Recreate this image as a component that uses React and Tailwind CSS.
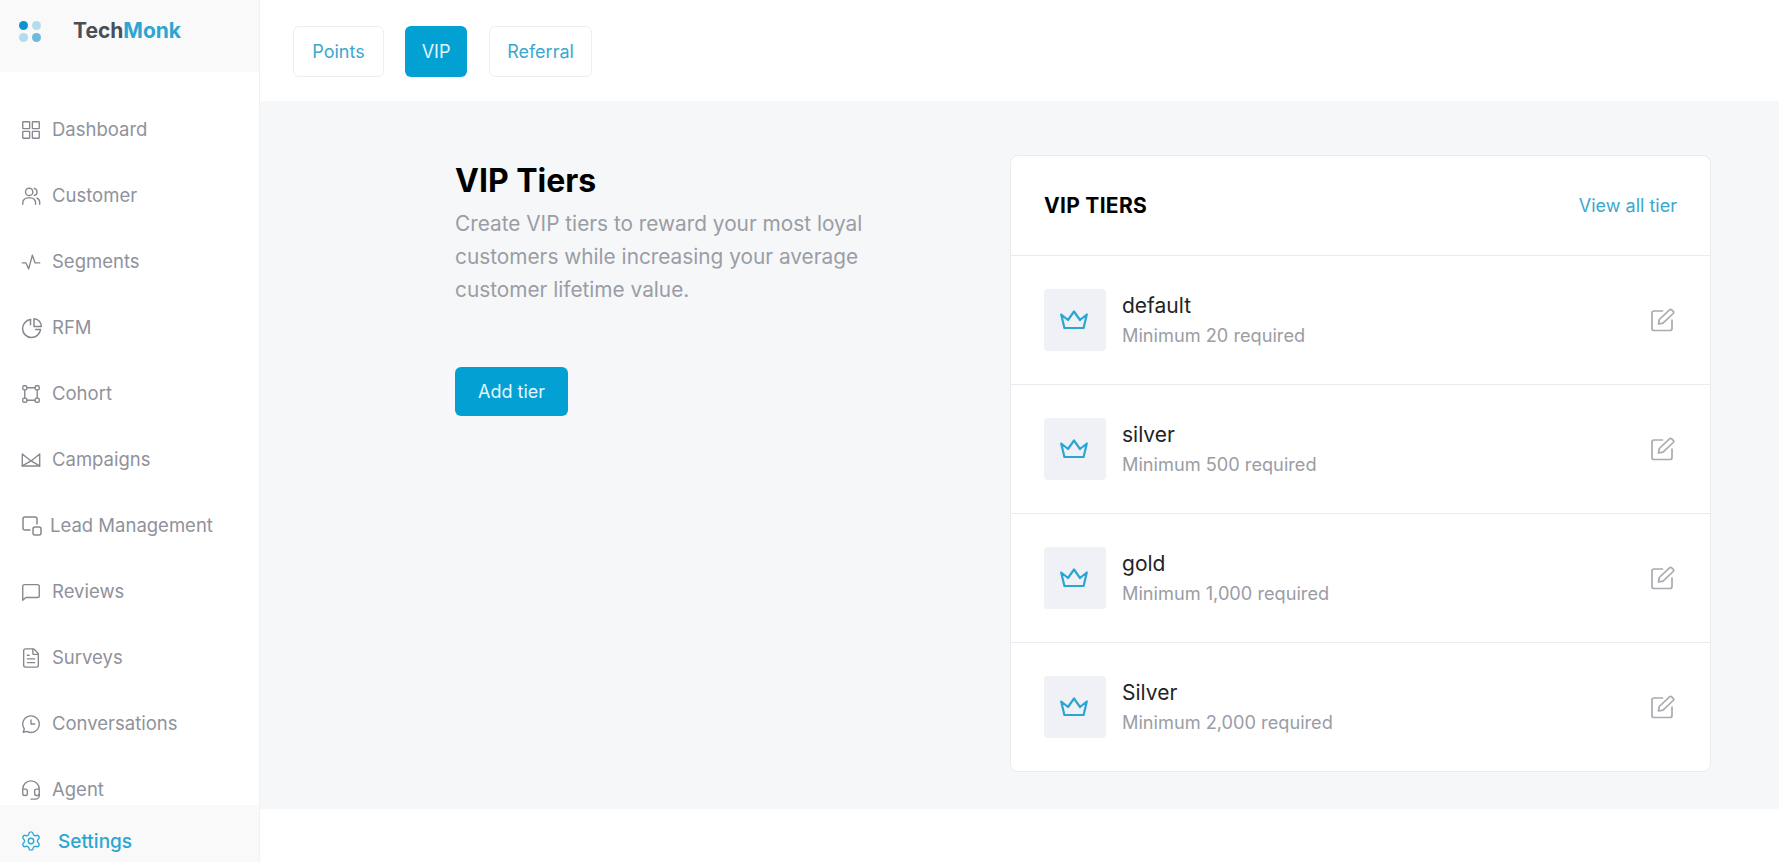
import React from "react";
import { Settings, Headset, FileText } from "lucide-react";

const font = "font-['Inter','Noto_Sans',sans-serif]";

const Ico = ({ children, className = "" }) => (
  <svg viewBox="0 0 24 24" fill="none" stroke="currentColor" strokeWidth="1.5" strokeLinecap="round" strokeLinejoin="round" className={"w-[22px] h-[22px] shrink-0 " + className}>
    {children}
  </svg>
);

const Dash = () => (
  <Ico>
    <rect x="3" y="3" width="7.5" height="7.5" rx="0.5" /><rect x="13.5" y="3" width="7.5" height="7.5" rx="0.5" />
    <rect x="3" y="13.5" width="7.5" height="7.5" rx="0.5" /><rect x="13.5" y="13.5" width="7.5" height="7.5" rx="0.5" />
  </Ico>
);
const Cust = () => (
  <Ico>
    <circle cx="10" cy="7.5" r="4" /><path d="M3 21v-1.5a5.5 5.5 0 0 1 5.5-5.5h3a5.5 5.5 0 0 1 5.5 5.5V21" />
    <path d="M15.5 3.6a4 4 0 0 1 0 7.8" /><path d="M18.5 14.3a5 5 0 0 1 3 4.7V21" />
  </Ico>
);
const Seg = () => (
  <Ico><path d="M2.5 13h4l3 6.5 4-15 3 8.5h5" /></Ico>
);
const Rfm = () => (
  <Ico className="w-[24px] h-[24px]">
    <path d="M10.5 3.6a9 9 0 1 0 10 10h-4.8" /><path d="M10.5 3.6v5.2" />
    <path d="M14 2.8a7.5 7.5 0 0 1 7.3 7.6H14z" />
  </Ico>
);
const Cohort = () => (
  <Ico>
    <rect x="3" y="3" width="4.5" height="4.5" rx="1.5" /><rect x="16.5" y="3" width="4.5" height="4.5" rx="1.5" />
    <rect x="3" y="16.5" width="4.5" height="4.5" rx="1.5" /><rect x="16.5" y="16.5" width="4.5" height="4.5" rx="1.5" />
    <path d="M7.5 5.2h9M7.5 18.8h9M5.2 7.5v9M18.8 7.5v9" />
  </Ico>
);
const Camp = () => (
  <Ico>
    <path d="M2.5 5.5v13h19v-13l-9.5 7.5z" /><path d="M2.5 18.5l9.5-5.5 9.5 5.5" />
  </Ico>
);
const Lead = () => (
  <Ico className="w-[24px] h-[24px]">
    <path d="M10 16H5a2 2 0 0 1-2-2V5a2 2 0 0 1 2-2h10a2 2 0 0 1 2 2v5" />
    <rect x="13" y="13" width="8" height="8" rx="2" />
  </Ico>
);
const Rev = () => (
  <Ico><path d="M3 21V6a2 2 0 0 1 2-2h14a2 2 0 0 1 2 2v10a2 2 0 0 1-2 2H6.5z" /></Ico>
);
const Conv = () => (
  <Ico>
    <path d="M3.5 21l1.2-3.6A9 9 0 1 1 7.6 20z" /><path d="M12 7.5V12h4" />
  </Ico>
);
const Crown = () => (
  <svg viewBox="0 0 28 19" fill="none" stroke="#2ba6d2" strokeWidth="2.2" strokeLinejoin="round" strokeLinecap="round" className="w-[28px] h-[19px] -ml-[2px] -mt-[2px]">
    <path d="M1.2 4.5L8 10l6-8.5L20 10l6.8-5.5L23.6 18H4.4z" />
  </svg>
);
const Edit = () => (
  <svg viewBox="0 0 26 24" fill="none" stroke="#a9abaf" strokeWidth="1.7" strokeLinejoin="round" strokeLinecap="round" className="w-[26px] h-[24px] shrink-0 -mt-[1px]">
    <path d="M12.5 3H4a2 2 0 0 0-2 2v15.5a2 2 0 0 0 2 2h16a2 2 0 0 0 2-2V12" />
    <path d="M8.5 16l.8-4.5L19.5 1.8a1.6 1.6 0 0 1 2.2 0l1.5 1.5a1.6 1.6 0 0 1 0 2.2L13 15.2z" />
  </svg>
);

const navItems = [
  ["Dashboard", <Dash />, "gap-[10px]"],
  ["Customer", <Cust />, "gap-[10px]"],
  ["Segments", <Seg />, "gap-[10px]"],
  ["RFM", <Rfm />, "gap-[8px]"],
  ["Cohort", <Cohort />, "gap-[10px]"],
  ["Campaigns", <Camp />, "gap-[10px]"],
  ["Lead Management", <Lead />, "gap-[6px]"],
  ["Reviews", <Rev />, "gap-[10px]"],
  ["Surveys", <FileText size={22} strokeWidth={1.5} className="shrink-0" />, "gap-[10px]"],
  ["Conversations", <Conv />, "gap-[10px]"],
  ["Agent", <Headset size={22} strokeWidth={1.5} className="shrink-0" />, "gap-[10px]"],
];

const tiers = [
  ["default", "Minimum 20 required"],
  ["silver", "Minimum 500 required"],
  ["gold", "Minimum 1,000 required"],
  ["Silver", "Minimum 2,000 required"],
];

export default function App() {
  return (
    <div className={"flex h-[862px] overflow-hidden bg-white " + font}>
      <aside className="w-[260px] shrink-0 flex flex-col border-r border-[#f0f1f3] bg-white">
        <div className="h-[72px] shrink-0 bg-[#f9f9f9] flex items-start pl-[19px] pt-[21px]">
          <div className="grid grid-cols-2 gap-x-[3px] gap-y-[3px] w-[22px] mr-[32px]">
            <span className="w-[9px] h-[9px] rounded-full bg-[#0d93cf]" />
            <span className="w-[9px] h-[9px] rounded-full bg-[#b3dcee]" />
            <span className="w-[9px] h-[9px] rounded-full bg-[#b3dcee]" />
            <span className="w-[9px] h-[9px] rounded-full bg-[#6cbbdf]" />
          </div>
          <div className="text-[21px] leading-[24px] font-bold text-[#4a4e57] -mt-[2px]">
            Tech<span className="text-[#2ba6d2]">Monk</span>
          </div>
        </div>
        <nav className="flex-1 overflow-hidden pt-[25px] flex flex-col">
          {navItems.map(([label, icon, gap]) => (
            <div key={label} className={"h-[66px] shrink-0 flex items-center pl-[20px] text-[18.5px] text-[#8f929b] " + gap}>
              <span className="text-[#85888f] flex">{icon}</span>
              <span>{label}</span>
            </div>
          ))}
        </nav>
        <div className="h-[57px] shrink-0 bg-[#f9f9f9] flex items-start pt-[25px] pl-[20px] gap-[16px] text-[19px] leading-[24px] font-medium text-[#2ba6d2]">
          <Settings size={22} strokeWidth={1.5} />
          <span>Settings</span>
        </div>
      </aside>

      <main className="flex-1 min-w-0 flex flex-col">
        <div className="h-[101px] shrink-0 flex items-center pl-[33px] pt-[1px] text-[18px]">
          <button className="h-[51px] w-[91px] rounded-[6px] border border-[#eceef0] text-[#3aa8cf] bg-white">Points</button>
          <button className="ml-[21px] h-[51px] w-[62px] rounded-[6px] bg-[#03a0d4] text-[#e4f6fc]">VIP</button>
          <button className="ml-[22px] h-[51px] w-[103px] rounded-[6px] border border-[#eceef0] text-[#3aa8cf] bg-white">Referral</button>
        </div>
        <div className="h-[708px] shrink-0 bg-[#f6f7f9] pl-[195px] pt-[54px] flex items-start">
          <div className="w-[555px] shrink-0">
            <h1 className="text-[32px] leading-[40px] font-bold text-black mt-[6px]">VIP Tiers</h1>
            <p className="text-[20.8px] leading-[33px] text-[#9a9da5] w-[450px] mt-[6px]">
              Create VIP tiers to reward your most loyal customers while increasing your average customer lifetime value.
            </p>
            <button className="mt-[61px] w-[113px] h-[49px] rounded-[6px] bg-[#03a0d4] text-[#e4f6fc] text-[18px]">Add tier</button>
          </div>
          <section className="w-[701px] shrink-0 rounded-[8px] border border-[#e9ebee] bg-white">
            <div className="h-[100px] flex items-center justify-between pl-[33px] pr-[33px] border-b border-[#e9ebee]">
              <h2 className="text-[21px] tracking-[0.3px] font-bold text-black pt-[1px]">VIP TIERS</h2>
              <a className="text-[18px] text-[#3aa8cf]">View all tier</a>
            </div>
            {tiers.map(([name, req], i) => (
              <div key={name} className={"flex items-center pl-[33px] pr-[34px] " + (i < 3 ? "h-[129px] border-b border-[#e9ebee]" : "h-[128px]")}>
                <div className="w-[62px] h-[62px] rounded-[4px] bg-[#eff1f7] flex items-center justify-center shrink-0">
                  <Crown />
                </div>
                <div className="ml-[16px] flex-1">
                  <div className="text-[21px] leading-[28px] text-[#222326]">{name}</div>
                  <div className="text-[18.2px] leading-[26px] mt-[2px] text-[#9a9da5]">{req}</div>
                </div>
                <Edit />
              </div>
            ))}
          </section>
        </div>
        <div className="flex-1 bg-white" />
      </main>
    </div>
  );
}
